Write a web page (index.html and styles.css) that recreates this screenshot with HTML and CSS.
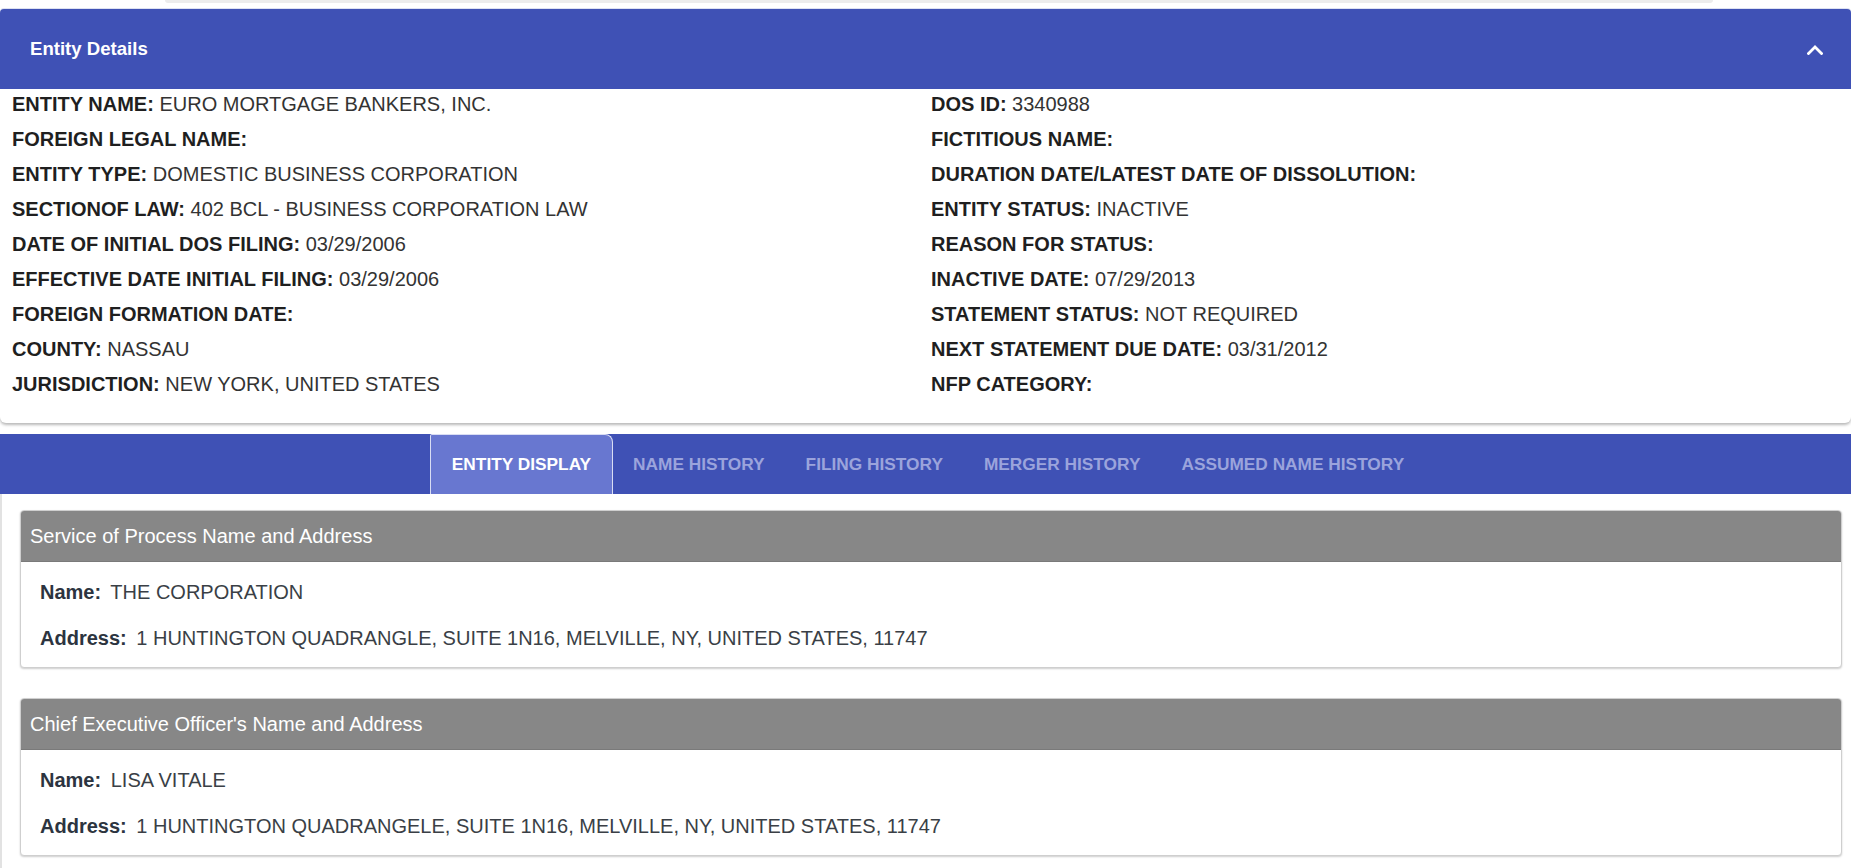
FILE: index.html
```html
<!DOCTYPE html>
<html lang="en">
<head>
<meta charset="utf-8">
<title>Entity Details</title>
<link rel="stylesheet" href="styles.css">
</head>
<body>
<div class="topstrip"></div>
<section class="card">
  <header class="card-head">
    <h2 class="card-title">Entity Details</h2>
    <svg class="chevron" viewBox="0 0 16 10" width="16" height="10" aria-hidden="true">
      <polyline points="1.5,8.5 8,2 14.5,8.5" fill="none" stroke="#ffffff" stroke-width="2.8" stroke-linecap="square"/>
    </svg>
  </header>
  <div class="details">
    <div class="col">
      <div class="row"><b>ENTITY NAME:</b> EURO MORTGAGE BANKERS, INC.</div>
      <div class="row"><b>FOREIGN LEGAL NAME:</b></div>
      <div class="row"><b>ENTITY TYPE:</b> DOMESTIC BUSINESS CORPORATION</div>
      <div class="row"><b>SECTIONOF LAW:</b> 402 BCL - BUSINESS CORPORATION LAW</div>
      <div class="row"><b>DATE OF INITIAL DOS FILING:</b> 03/29/2006</div>
      <div class="row"><b>EFFECTIVE DATE INITIAL FILING:</b> 03/29/2006</div>
      <div class="row"><b>FOREIGN FORMATION DATE:</b></div>
      <div class="row"><b>COUNTY:</b> NASSAU</div>
      <div class="row"><b>JURISDICTION:</b> NEW YORK, UNITED STATES</div>
    </div>
    <div class="col">
      <div class="row"><b>DOS ID:</b> 3340988</div>
      <div class="row"><b>FICTITIOUS NAME:</b></div>
      <div class="row"><b>DURATION DATE/LATEST DATE OF DISSOLUTION:</b></div>
      <div class="row"><b>ENTITY STATUS:</b> INACTIVE</div>
      <div class="row"><b>REASON FOR STATUS:</b></div>
      <div class="row"><b>INACTIVE DATE:</b> 07/29/2013</div>
      <div class="row"><b>STATEMENT STATUS:</b> NOT REQUIRED</div>
      <div class="row"><b>NEXT STATEMENT DUE DATE:</b> 03/31/2012</div>
      <div class="row"><b>NFP CATEGORY:</b></div>
    </div>
  </div>
</section>

<nav class="tabs">
  <a class="tab active">ENTITY DISPLAY</a>
  <a class="tab">NAME HISTORY</a>
  <a class="tab">FILING HISTORY</a>
  <a class="tab">MERGER HISTORY</a>
  <a class="tab">ASSUMED NAME HISTORY</a>
</nav>

<main class="content">
  <div class="panel">
    <div class="panel-head">Service of Process Name and Address</div>
    <div class="panel-body">
      <div class="line"><span class="lbl">Name:</span> THE CORPORATION</div>
      <div class="line"><span class="lbl">Address:</span> 1 HUNTINGTON QUADRANGLE, SUITE 1N16, MELVILLE, NY, UNITED STATES, 11747</div>
    </div>
  </div>
  <div class="panel">
    <div class="panel-head">Chief Executive Officer's Name and Address</div>
    <div class="panel-body">
      <div class="line"><span class="lbl">Name:</span> LISA VITALE</div>
      <div class="line"><span class="lbl">Address:</span> 1 HUNTINGTON QUADRANGELE, SUITE 1N16, MELVILLE, NY, UNITED STATES, 11747</div>
    </div>
  </div>
</main>
</body>
</html>
```

FILE: styles.css
```css
* { box-sizing: border-box; }

html, body {
  margin: 0;
  padding: 0;
  background: #ffffff;
  font-family: "Liberation Sans", Arial, Helvetica, sans-serif;
  overflow: hidden;
}

.topstrip {
  margin-left: 165px;
  width: 1548px;
  height: 3px;
  background: #ececec;
  border-radius: 0 0 6px 6px;
  margin-bottom: 6px;
}

.card {
  background: #ffffff;
  border-radius: 4px 4px 6px 6px;
  box-shadow: 0 2px 3px rgba(0, 0, 0, 0.28);
  padding-bottom: 20px;
}

.card-head {
  height: 80px;
  background: #3f51b5;
  border-radius: 4px 4px 0 0;
  box-shadow: 0 -1px 0 #dde1f2;
  display: flex;
  align-items: center;
  justify-content: space-between;
  padding: 0 28px 0 30px;
}

.card-title {
  margin: 0;
  color: #ffffff;
  font-size: 18.6px;
  font-weight: bold;
}

.chevron {
  display: block;
  margin-top: 2px;
}

.details {
  display: grid;
  grid-template-columns: 919px 1fr;
  padding-left: 12px;
  margin-top: -1px;
  font-size: 20px;
  color: #333333;
}

.row {
  line-height: 32px;
  height: 32px;
  margin-bottom: 3px;
  white-space: nowrap;
}

.row b {
  color: #1f1f1f;
}

.tabs {
  margin-top: 11px;
  height: 60px;
  background: #3f51b5;
  display: flex;
  justify-content: center;
  padding-left: 4px;
}

.tab {
  display: flex;
  align-items: center;
  padding: 0 20.5px;
  font-size: 17.3px;
  font-weight: bold;
  color: #9ba4dc;
  white-space: nowrap;
}

.tab.active {
  background: #6877d0;
  color: #ffffff;
  border: 1px solid #d9ddf3;
  border-bottom: none;
  border-radius: 2px 8px 0 0;
}

.content {
  border-left: 2px solid #e2e2e2;
  padding: 16px 9px 30px 18px;
  display: flex;
  flex-direction: column;
  gap: 30px;
}

.panel {
  border: 1px solid #cfcfcf;
  border-radius: 4px;
  box-shadow: 0 1px 2px rgba(0, 0, 0, 0.2);
  overflow: hidden;
  background: #ffffff;
}

.panel-head {
  height: 51px;
  background: #878787;
  color: #ffffff;
  font-size: 20px;
  display: flex;
  align-items: center;
  padding-left: 9px;
  border-bottom: 1px solid #7a7a7a;
}

.panel-body {
  padding: 15px 19px 14px 19px;
  display: flex;
  flex-direction: column;
  gap: 16px;
  font-size: 20px;
  color: #3a3f46;
}

.line {
  line-height: 30px;
  height: 30px;
  white-space: nowrap;
}

.lbl {
  font-weight: bold;
  color: #2c3440;
  margin-right: 4px;
}
```
